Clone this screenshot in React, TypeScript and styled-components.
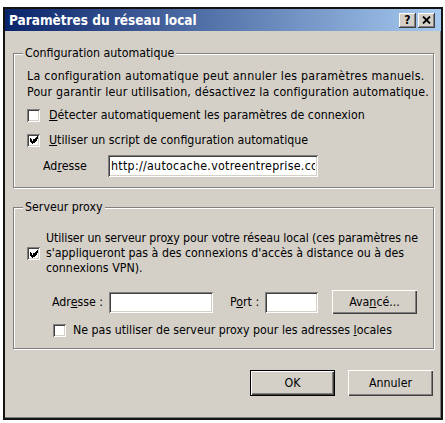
import styled, { createGlobalStyle } from "styled-components";

const face = "#d4d0c8";

const GlobalStyle = createGlobalStyle`
  body {
    margin: 0;
    background: #fff;
    font-family: "DejaVu Sans Condensed", "DejaVu Sans", sans-serif;
    font-size: 12.3px;
    color: #000;
  }
`;

const Page = styled.div`
  padding: 7px 2px 0 3px;
`;

const Window = styled.div`
  width: 440px;
  height: 413px;
  box-sizing: border-box;
  background: ${face};
  border: 2px solid #141414;
  box-shadow: inset -1px -1px 0 #808080;
  display: flex;
  flex-direction: column;
`;

const TitleBar = styled.div`
  height: 22px;
  display: flex;
  align-items: center;
  gap: 2px;
  padding: 0 6px 0 4px;
  background: linear-gradient(to right, #0a246a, #a6caf0);
`;

const Title = styled.div`
  flex: 1;
  color: #fff;
  font-weight: bold;
  font-size: 13.5px;
`;

const CaptionButton = styled.div`
  width: 17px;
  height: 15px;
  box-sizing: border-box;
  background: ${face};
  display: flex;
  align-items: center;
  justify-content: center;
  font-weight: bold;
  font-size: 12px;
  box-shadow: inset -1px -1px 0 #404040, inset 1px 1px 0 #fff,
    inset -2px -2px 0 #808080;
`;

const Body = styled.div`
  display: flex;
  flex-direction: column;
  padding: 14px 7px 0 8px;
`;

const Group = styled.fieldset<{ $top?: number }>`
  margin: ${(p) => p.$top ?? 0}px 0 0;
  padding: 0 2px 0 13px;
  border: 1px solid #808080;
  box-shadow: 1px 1px 0 #fff, inset 1px 1px 0 #fff;
  display: flex;
  flex-direction: column;
  min-width: 0;
`;

const Legend = styled.legend`
  margin-left: -4px;
  padding: 0 2px;
  line-height: 16px;
  background: ${face};
`;

const Para = styled.div<{ $top: number; $lh: number }>`
  margin-top: ${(p) => p.$top}px;
  line-height: ${(p) => p.$lh}px;
  white-space: nowrap;
`;

const Line = styled.div<{ $ls?: number }>`
  letter-spacing: ${(p) => p.$ls ?? 0}px;
`;

const CheckRow = styled.div<{ $top: number; $gap: number; $indent?: number }>`
  display: flex;
  align-items: center;
  gap: ${(p) => p.$gap}px;
  margin-top: ${(p) => p.$top}px;
  margin-left: ${(p) => p.$indent ?? 0}px;
  min-height: 20px;
  line-height: 15px;
  white-space: nowrap;
`;

const Box = styled.span`
  flex: none;
  width: 13px;
  height: 13px;
  box-sizing: border-box;
  background: #fff;
  display: flex;
  align-items: center;
  justify-content: center;
  box-shadow: inset 1px 1px 0 #808080, inset -1px -1px 0 #fff,
    inset 2px 2px 0 #404040, inset -2px -2px 0 ${face};
`;

const FieldRow = styled.div<{ $top: number; $indent: number }>`
  display: flex;
  align-items: center;
  margin-top: ${(p) => p.$top}px;
  padding-left: ${(p) => p.$indent}px;
  height: 24px;
`;

const Label = styled.span<{ $w?: number; $ml?: number }>`
  width: ${(p) => (p.$w ? `${p.$w}px` : "auto")};
  margin-left: ${(p) => p.$ml ?? 0}px;
  flex: none;
`;

const Field = styled.input<{ $w: number; $h: number }>`
  width: ${(p) => p.$w}px;
  height: ${(p) => p.$h}px;
  margin: 0;
  box-sizing: border-box;
  border: none;
  outline: none;
  padding: 0 3px;
  font: inherit;
  letter-spacing: 0.3px;
  color: #000;
  background: #fff;
  box-shadow: inset 1px 1px 0 #808080, inset -1px -1px 0 #fff,
    inset 2px 2px 0 #404040, inset -2px -2px 0 ${face};
`;

const Button = styled.button<{ $w: number; $h: number; $ml?: number; $default?: boolean }>`
  width: ${(p) => p.$w}px;
  height: ${(p) => p.$h}px;
  margin-left: ${(p) => p.$ml ?? 0}px;
  padding: 0;
  font: inherit;
  color: #000;
  background: ${face};
  border: ${(p) => (p.$default ? "1px solid #000" : "none")};
  box-sizing: border-box;
  box-shadow: inset 1px 1px 0 #fff, inset -1px -1px 0 #404040,
    inset -2px -2px 0 #808080;
`;

const Footer = styled.div`
  display: flex;
  justify-content: flex-end;
  gap: 13px;
  margin-top: 21px;
  padding-right: 1px;
`;

function Check({ checked }: { checked?: boolean }) {
  return (
    <Box>
      {checked && (
        <svg width="8" height="8" viewBox="0 0 7 7" shapeRendering="crispEdges">
          <path
            fill="#000"
            d="M6 0h1v1h-1z M5 1h2v1h-2z M0 2h1v1h-1z M4 2h3v1h-3z M0 3h2v1h-2z M3 3h3v1h-3z M0 4h5v1h-5z M1 5h3v1h-3z M2 6h1v1h-1z"
          />
        </svg>
      )}
    </Box>
  );
}

export default function App() {
  return (
    <Page>
      <GlobalStyle />
      <Window>
        <TitleBar>
          <Title>Paramètres du réseau local</Title>
          <CaptionButton>?</CaptionButton>
          <CaptionButton>
            <svg width="9" height="8" viewBox="0 0 9 8">
              <path d="M1 0.5 L8 7.5 M8 0.5 L1 7.5" stroke="#000" strokeWidth="1.8" />
            </svg>
          </CaptionButton>
        </TitleBar>
        <Body>
          <Group>
            <Legend>Configuration automatique</Legend>
            <Para $top={7} $lh={16}>
              <Line $ls={0.28}>La configuration automatique peut annuler les paramètres manuels.</Line>
              <Line $ls={0.18}>Pour garantir leur utilisation, désactivez la configuration automatique.</Line>
            </Para>
            <CheckRow $top={5} $gap={9}>
              <Check />
              <span>
                <u>D</u>étecter automatiquement les paramètres de connexion
              </span>
            </CheckRow>
            <CheckRow $top={5} $gap={9}>
              <Check checked />
              <span>
                <u>U</u>tiliser un script de configuration automatique
              </span>
            </CheckRow>
            <FieldRow $top={4} $indent={16}>
              <Label $w={65}>
                Ad<u>r</u>esse
              </Label>
              <Field $w={210} $h={22} readOnly value="http://autocache.votreentreprise.com/proxy.pac" />
            </FieldRow>
            <div style={{ height: 9 }} />
          </Group>
          <Group $top={11}>
            <Legend>Serveur proxy</Legend>
            <CheckRow $top={16} $gap={6}>
              <Check checked />
              <Para $top={0} $lh={15}>
                <Line $ls={-0.1}>
                  Utiliser un serveur pro<u>x</u>y pour votre réseau local (ces paramètres ne
                </Line>
                <Line>s'appliqueront pas à des connexions d'accès à distance ou à des</Line>
                <Line>connexions VPN).</Line>
              </Para>
            </CheckRow>
            <FieldRow $top={14} $indent={25}>
              <Label $w={57}>
                Adr<u>e</u>sse :
              </Label>
              <Field $w={104} $h={21} readOnly value="" />
              <Label $w={35} $ml={17}>
                P<u>o</u>rt :
              </Label>
              <Field $w={53} $h={21} readOnly value="" />
              <Button $w={85} $h={24} $ml={14}>
                Ava<u>n</u>cé...
              </Button>
            </FieldRow>
            <CheckRow $top={6} $gap={7} $indent={26}>
              <Check />
              <span>
                Ne pas utiliser de serveur proxy pour les adresses <u>l</u>ocales
              </span>
            </CheckRow>
            <div style={{ height: 8 }} />
          </Group>
          <Footer>
            <Button $w={85} $h={26} $default>
              OK
            </Button>
            <Button $w={85} $h={26}>
              Annuler
            </Button>
          </Footer>
        </Body>
      </Window>
    </Page>
  );
}
